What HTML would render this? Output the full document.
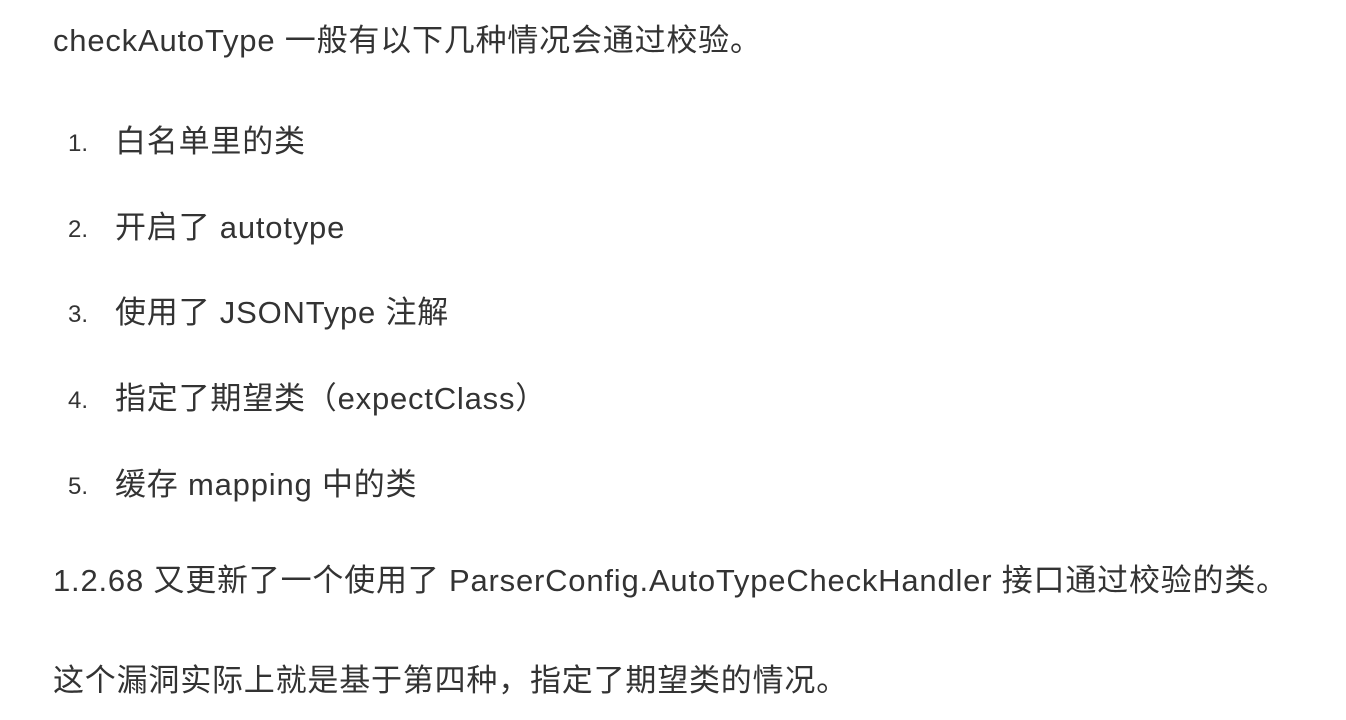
<!DOCTYPE html>
<html><head><meta charset="utf-8"><style>
html,body{margin:0;padding:0;background:#fff;width:1346px;height:720px;overflow:hidden}
.l{position:absolute;left:53px;font-family:"Liberation Sans","Noto Sans CJK SC",sans-serif;font-size:31px;letter-spacing:0.8px;line-height:40px;color:#333;white-space:nowrap}
.n{position:absolute;left:68px;font-family:"Liberation Sans",sans-serif;font-size:24px;line-height:40px;color:#333}
.i{left:115px}
</style></head><body>
<div class="l" style="top:21px">checkAutoType 一般有以下几种情况会通过校验。</div>
<div class="n" style="top:124px">1.</div><div class="l i" style="top:122px">白名单里的类</div>
<div class="n" style="top:210px">2.</div><div class="l i" style="top:208px">开启了 autotype</div>
<div class="n" style="top:295px">3.</div><div class="l i" style="top:293px">使用了 JSONType 注解</div>
<div class="n" style="top:381px">4.</div><div class="l i" style="top:379px">指定了期望类（expectClass）</div>
<div class="n" style="top:467px">5.</div><div class="l i" style="top:465px">缓存 mapping 中的类</div>
<div class="l" style="top:561px">1.2.68 又更新了一个使用了 ParserConfig.AutoTypeCheckHandler 接口通过校验的类。</div>
<div class="l" style="top:661px">这个漏洞实际上就是基于第四种，指定了期望类的情况。</div>
</body></html>
